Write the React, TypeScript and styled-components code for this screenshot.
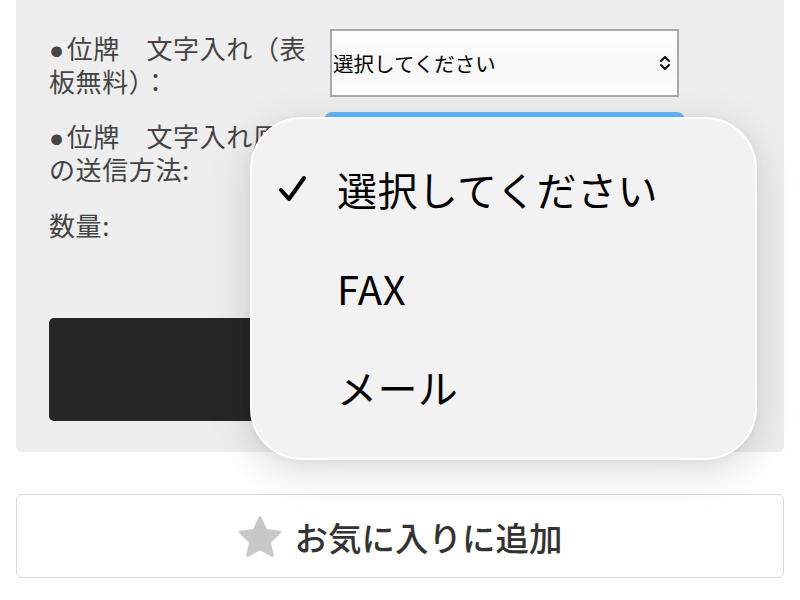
import React from "react";
import styled, { createGlobalStyle } from "styled-components";

const Global = createGlobalStyle`
  html, body { margin: 0; padding: 0; background: #fff; }
  body {
    font-family: "Noto Sans CJK JP", "Noto Sans", sans-serif;
    width: 800px; height: 600px; overflow: hidden;
  }
  #root { width: 800px; height: 600px; }
`;

const Page = styled.div`
  position: relative;
  width: 800px;
  height: 600px;
  padding: 0 16px;
  box-sizing: border-box;
  display: flex;
  flex-direction: column;
  gap: 42px;
`;

const Panel = styled.div`
  background: #eeeeee;
  border-radius: 0 0 6px 6px;
  padding: 29px 33px 31px 33px;
  display: flex;
  flex-direction: column;
  gap: 43px;
`;

const Form = styled.div`
  display: grid;
  grid-template-columns: 281px 349px;
  grid-auto-rows: 68px;
  row-gap: 21px;
`;

const Label = styled.div<{ $pad?: number }>`
  font-size: 26px;
  line-height: 33px;
  letter-spacing: 0.6px;
  color: #444;
  padding-top: ${(p) => p.$pad ?? 1}px;
  white-space: nowrap;
`;

const Bullet = styled.span`
  font-family: "Liberation Sans", "DejaVu Sans", sans-serif;
  font-size: 25px;
  line-height: 0;
  margin-right: 2px;
`;

const SelectBox = styled.div<{ $focus?: boolean }>`
  position: relative;
  height: 68px;
  box-sizing: border-box;
  border: 2px solid #a9a9a9;
  background: linear-gradient(#ffffff, #f7f7f7 60%, #ffffff);
  display: flex;
  align-items: center;
  padding-left: 1px;
  font-size: 20.5px;
  color: #000;
  border-radius: ${(p) => (p.$focus ? "3px" : "0")};
  box-shadow: ${(p) => (p.$focus ? "0 0 0 6px #6fb5f0" : "none")};
`;

const Arrows = styled.svg`
  position: absolute;
  right: 6px;
  top: 50%;
  transform: translateY(-50%);
`;

const QtyBox = styled.div`
  height: 68px;
`;

const DarkButton = styled.div`
  height: 103px;
  background: #262626;
  border-radius: 5px;
`;

const FavButton = styled.div`
  height: 84px;
  box-sizing: border-box;
  border: 1px solid #d9d9d9;
  border-radius: 6px;
  background: #fff;
  display: flex;
  align-items: center;
  justify-content: center;
  gap: 13px;
  font-size: 33.5px;
  font-weight: 500;
  color: #333;
  padding-top: 1px;
`;

const Popup = styled.div`
  position: absolute;
  left: 250px;
  top: 117px;
  width: 507px;
  height: 343px;
  box-sizing: border-box;
  background: #f2f2f2;
  border: 2px solid #ffffff;
  border-radius: 52px;
  box-shadow: 0 10px 44px rgba(0, 0, 0, 0.15), 0 2px 10px rgba(0, 0, 0, 0.05);
  padding-top: 20px;
  display: flex;
  flex-direction: column;
`;

const Item = styled.div`
  height: 99px;
  display: flex;
  align-items: center;
  font-size: 40px;
  color: #000;
  line-height: 1;
`;

const ItemText = styled.span`
  letter-spacing: 0.4px;
`;

const CheckCol = styled.div`
  width: 85px;
  padding-left: 26px;
  box-sizing: border-box;
  display: flex;
  align-items: center;
`;

const Chevrons = () => (
  <Arrows width="12" height="18" viewBox="0 0 12 18">
    <path d="M2 7 L6 3 L10 7" fill="none" stroke="#111" strokeWidth="2" strokeLinecap="round" strokeLinejoin="round" />
    <path d="M2 11 L6 15 L10 11" fill="none" stroke="#111" strokeWidth="2" strokeLinecap="round" strokeLinejoin="round" />
  </Arrows>
);

const Check = () => (
  <svg width="29" height="28" viewBox="0 0 29 28">
    <path d="M3 15 L11 24 L26 3" fill="none" stroke="#000" strokeWidth="4" strokeLinecap="round" strokeLinejoin="round" />
  </svg>
);

const Star = () => (
  <svg width="44" height="42" viewBox="1.2 1 21.6 20.6">
    <path
      d="M12 1.8l2.9 6.3 6.8.8-5 4.7 1.3 6.8L12 17l-6 3.4 1.3-6.8-5-4.7 6.8-.8z"
      fill="#c8c8c8"
      stroke="#c8c8c8"
      strokeWidth="1.4"
      strokeLinejoin="round"
    />
  </svg>
);

export default function App() {
  return (
    <>
      <Global />
      <Page>
        <Panel>
          <Form>
            <Label $pad={2}>
              <Bullet>●</Bullet>位牌　文字入れ（表
              <br />
              板無料）：
            </Label>
            <SelectBox>
              選択してください
              <Chevrons />
            </SelectBox>
            <Label>
              <Bullet>●</Bullet>位牌　文字入れ原稿
              <br />
              の送信方法:
            </Label>
            <SelectBox $focus>
              選択してください
              <Chevrons />
            </SelectBox>
            <Label>数量:</Label>
            <QtyBox />
          </Form>
          <DarkButton />
        </Panel>
        <FavButton>
          <Star />
          <span>お気に入りに追加</span>
        </FavButton>
        <Popup>
          <Item>
            <CheckCol>
              <Check />
            </CheckCol>
            <ItemText>選択してください</ItemText>
          </Item>
          <Item>
            <CheckCol />
            <ItemText>FAX</ItemText>
          </Item>
          <Item>
            <CheckCol />
            <ItemText>メール</ItemText>
          </Item>
        </Popup>
      </Page>
    </>
  );
}
